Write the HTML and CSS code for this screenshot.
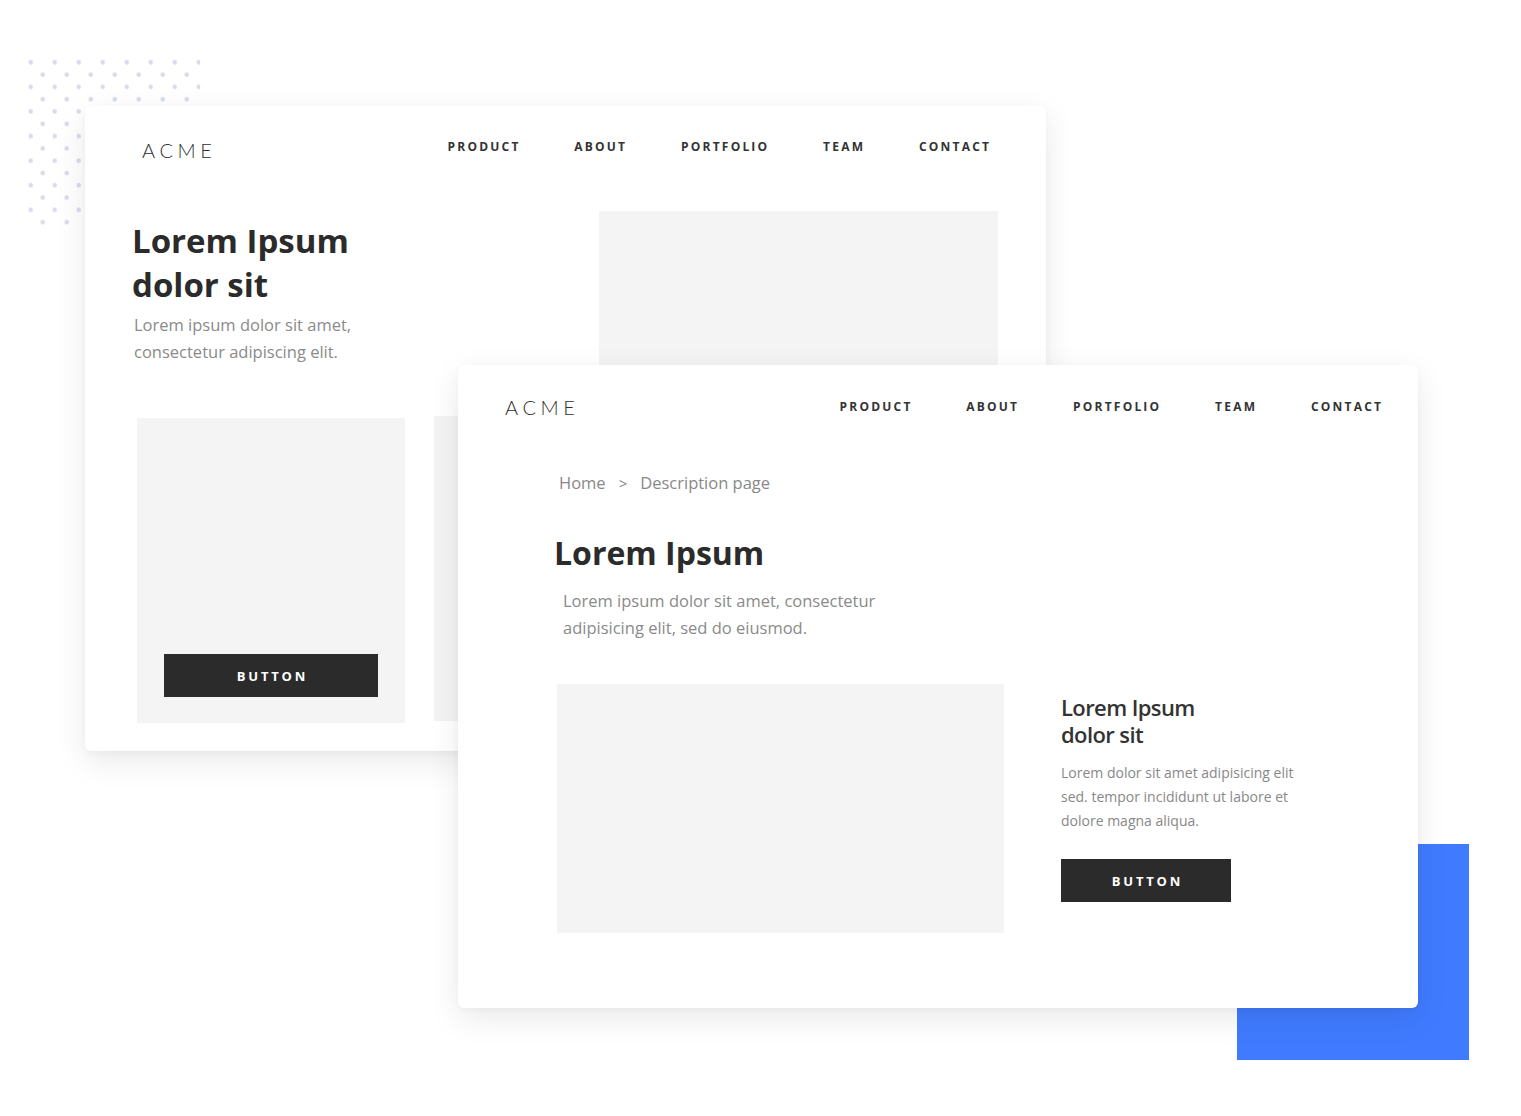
FILE: index.html
```html
<!DOCTYPE html>
<html>
<head>
<meta charset="utf-8">
<link rel="stylesheet" href="styles.css">
</head>
<body>
<div class="stage">
  <svg class="dots" width="176" height="172" viewBox="0 0 176 172">
    <defs>
      <pattern id="dp" x="0" y="0" width="24" height="24.6" patternUnits="userSpaceOnUse">
        <circle cx="6.7" cy="6.3" r="2.3" fill="#d8dcec"/>
        <circle cx="18.7" cy="18.6" r="2.3" fill="#d8dcec"/>
      </pattern>
    </defs>
    <rect width="176" height="172" fill="url(#dp)"/>
  </svg>

  <div class="blue"></div>

  <section class="card card-back">
    <header class="topbar topbar-back">
      <div class="logo">ACME</div>
      <nav class="nav">
        <span>PRODUCT</span><span>ABOUT</span><span>PORTFOLIO</span><span>TEAM</span><span>CONTACT</span>
      </nav>
    </header>
    <div class="hero">
      <div class="hero-text">
        <h1 class="h-big">Lorem Ipsum<br>dolor sit</h1>
        <p class="lead">Lorem ipsum dolor sit amet,<br>consectetur adipiscing elit.</p>
      </div>
      <div class="ph hero-img"></div>
    </div>
    <div class="tiles">
      <div class="ph tile"><div class="btn btn-tile">BUTTON</div></div>
      <div class="ph tile tile2"></div>
    </div>
  </section>

  <section class="card card-front">
    <header class="topbar topbar-front">
      <div class="logo">ACME</div>
      <nav class="nav">
        <span>PRODUCT</span><span>ABOUT</span><span>PORTFOLIO</span><span>TEAM</span><span>CONTACT</span>
      </nav>
    </header>
    <div class="crumbs"><span>Home</span><span class="sep">&gt;</span><span>Description page</span></div>
    <h1 class="h-mid">Lorem Ipsum</h1>
    <p class="lead lead-front">Lorem ipsum dolor sit amet, consectetur<br>adipisicing elit, sed do eiusmod.</p>
    <div class="detail">
      <div class="ph detail-img"></div>
      <div class="detail-text">
        <h2 class="h-small">Lorem Ipsum<br>dolor sit</h2>
        <p class="small">Lorem dolor sit amet adipisicing elit<br>sed. tempor incididunt ut labore et<br>dolore magna aliqua.</p>
        <div class="btn btn-side">BUTTON</div>
      </div>
    </div>
  </section>
</div>
</body>
</html>
```

FILE: styles.css
```css
* { box-sizing: border-box; margin: 0; padding: 0; }
html, body { background: #ffffff; }
body { font-family: "Open Sans", "Liberation Sans", sans-serif; color: #2b2b2b; }

.stage { position: relative; width: 1521px; height: 1116px; overflow: hidden; background: #fff; }

.dots { position: absolute; left: 24px; top: 56px; z-index: 0; }

.blue { position: absolute; left: 1237px; top: 844px; width: 232px; height: 216px; background: #407bff; z-index: 1; }

.card {
  position: absolute;
  background: #fff;
  border-radius: 6px;
  box-shadow: 0 10px 32px rgba(0, 0, 0, 0.09), 0 2px 6px rgba(0, 0, 0, 0.03);
  overflow: hidden;
}
.card-back { left: 85px; top: 106px; width: 961px; height: 645px; z-index: 2; }
.card-front { left: 458px; top: 365px; width: 960px; height: 643px; z-index: 3; }

.topbar { display: flex; align-items: center; justify-content: space-between; }
.topbar-back { padding: 0 57px; height: 82px; }
.topbar-front { padding: 0 37px 0 47px; height: 84px; }

.logo {
  font-family: "Lato", "Liberation Sans", sans-serif;
  font-weight: 300;
  font-size: 20px;
  letter-spacing: 4.6px;
  color: #2f2f2f;
  line-height: 24px;
}
.topbar-back .logo { margin-top: 6px; }

.nav { display: flex; gap: 56px; }
.nav span {
  font-weight: 700;
  font-size: 12px;
  letter-spacing: 2.2px;
  color: #333;
  line-height: 16px;
  margin-right: -2.2px;
}

.ph { background: #f4f4f4; }

.hero { display: flex; justify-content: space-between; padding: 23px 48px 0 47px; }
.hero-text { padding-top: 8px; }
.h-big { font-weight: 700; font-size: 33px; line-height: 44px; color: #2b2b2b; }
.lead { font-size: 16.5px; line-height: 27px; color: #8a8a8a; margin-top: 4px; margin-left: 2px; }
.hero-img { width: 399px; height: 300px; }

.tiles { position: absolute; left: 52px; top: 312px; display: flex; gap: 29px; }
.tile { width: 268px; height: 305px; position: relative; display: flex; align-items: flex-end; padding: 0 0 26px 27px; }
.tile2 { margin-top: -2px; }

.btn {
  background: #2b2b2b;
  color: #fff;
  font-weight: 700;
  font-size: 13px;
  letter-spacing: 2.8px;
  display: flex; align-items: center; justify-content: center;
  height: 43px;
  padding-left: 2.8px;
}
.btn-tile { width: 214px; }
.btn-side { width: 170px; margin-top: 26px; }

.crumbs { display: flex; gap: 13px; padding-left: 101px; margin-top: 22px; font-size: 16.5px; line-height: 24px; color: #888; }
.crumbs .sep { font-size: 15px; }

.h-mid { font-weight: 700; font-size: 32px; line-height: 44px; padding-left: 96px; margin-top: 36px; color: #2b2b2b; }
.lead-front { padding-left: 105px; margin-left: 0; margin-top: 12px; }

.detail { display: flex; margin-top: 43px; padding-left: 99px; gap: 57px; }
.detail-img { width: 447px; height: 249px; }
.detail-text { padding-top: 10px; }
.h-small { font-weight: 600; font-size: 22px; line-height: 27px; letter-spacing: -0.6px; color: #333; }
.small { font-size: 14px; line-height: 24px; color: #888; margin-top: 13px; }
```
